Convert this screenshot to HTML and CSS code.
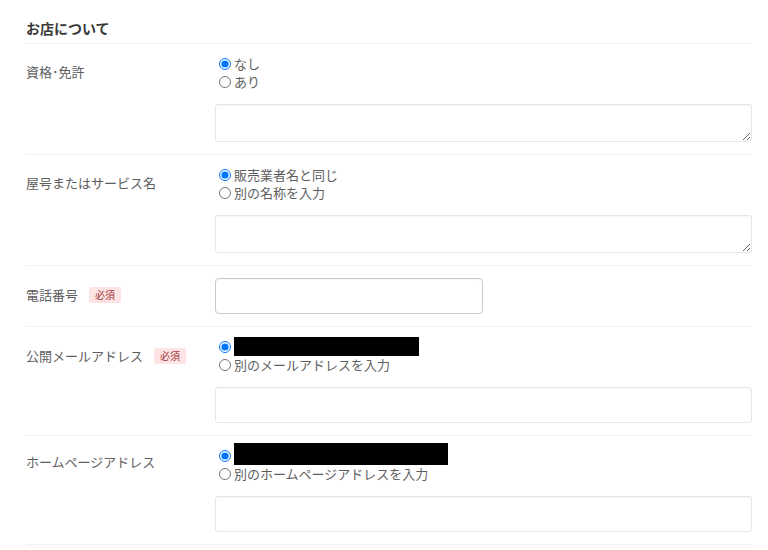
FILE: index.html
```html
<!DOCTYPE html>
<html lang="ja">
<head>
<meta charset="utf-8">
<title>お店について</title>
<link rel="stylesheet" href="styles.css">
</head>
<body>
<div class="page">
  <h2 class="section-title">お店について</h2>

  <div class="row">
    <div class="label">資格･免許</div>
    <div class="field">
      <div class="radios">
        <label class="radio"><input type="radio" name="lic" checked>なし</label>
        <label class="radio"><input type="radio" name="lic">あり</label>
      </div>
      <textarea class="textarea"></textarea>
    </div>
  </div>

  <div class="row">
    <div class="label">屋号またはサービス名</div>
    <div class="field">
      <div class="radios">
        <label class="radio"><input type="radio" name="shop" checked>販売業者名と同じ</label>
        <label class="radio"><input type="radio" name="shop">別の名称を入力</label>
      </div>
      <textarea class="textarea"></textarea>
    </div>
  </div>

  <div class="row row-phone">
    <div class="label">電話番号<span class="badge">必須</span></div>
    <div class="field">
      <input type="text" class="input input-short">
    </div>
  </div>

  <div class="row">
    <div class="label label-low">公開メールアドレス<span class="badge">必須</span></div>
    <div class="field">
      <div class="radios">
        <label class="radio"><input type="radio" name="mail" checked><span class="redact redact-mail"></span></label>
        <label class="radio"><input type="radio" name="mail">別のメールアドレスを入力</label>
      </div>
      <input type="text" class="input">
    </div>
  </div>

  <div class="row">
    <div class="label label-high">ホームページアドレス</div>
    <div class="field">
      <div class="radios">
        <label class="radio"><input type="radio" name="hp" checked><span class="redact redact-hp"></span></label>
        <label class="radio"><input type="radio" name="hp">別のホームページアドレスを入力</label>
      </div>
      <input type="text" class="input">
    </div>
  </div>
</div>
</body>
</html>
```

FILE: styles.css
```css
* { box-sizing: border-box; }

body {
  margin: 0;
  background: #ffffff;
  font-family: "Noto Sans CJK JP", "Noto Sans", sans-serif;
  color: #5e5e5e;
  font-size: 13px;
  line-height: 18px;
}

.page {
  padding: 18px 16px 0 26px;
}

.section-title {
  margin: 0;
  font-size: 14px;
  line-height: 20px;
  font-weight: bold;
  color: #3a3a3a;
  padding-bottom: 5px;
  border-bottom: 1px solid #f1f1f1;
}

.row {
  display: flex;
  padding: 11px 0 12px;
  border-bottom: 1px solid #f1f1f1;
}
.row-phone { padding-top: 12px; }

.label {
  width: 189px;
  flex: none;
  padding-top: 8px;
  display: flex;
  align-items: center;
  align-self: flex-start;
}
.label-low { padding-top: 9px; }
.label-high { padding-top: 6px; }

.badge {
  display: inline-block;
  margin-left: 11px;
  width: 32px;
  height: 16px;
  line-height: 16px;
  text-align: center;
  font-size: 10px;
  color: #a03a3a;
  background: #fde3e3;
  border-radius: 2px;
}

.field {
  flex: 1;
  display: flex;
  flex-direction: column;
  gap: 13px;
}

.radios {
  display: flex;
  flex-direction: column;
}

.radio {
  display: flex;
  align-items: center;
  height: 18px;
}

.radio input {
  width: 12px;
  height: 12px;
  margin: 0 3px 0 4px;
  flex: none;
}

.redact {
  display: inline-block;
  background: #000000;
  flex: none;
}
.redact-mail { width: 185px; height: 19px; margin-top: -1px; }
.redact-hp { width: 214px; height: 22px; margin-top: -4px; }

.textarea {
  display: block;
  width: 100%;
  height: 38px;
  border: 1px solid #e6e6e6;
  border-radius: 3px;
  box-shadow: inset 0 1px 1px rgba(0,0,0,0.03);
  font: inherit;
  margin: 0;
  resize: vertical;
}

.input {
  display: block;
  width: 100%;
  height: 36px;
  border: 1px solid #e6e6e6;
  border-radius: 3px;
  box-shadow: inset 0 1px 1px rgba(0,0,0,0.03);
  font: inherit;
  margin: 0;
}

.input-short {
  width: 268px;
  height: 36px;
  border-color: #c9c9c9;
  border-radius: 4px;
}
```
